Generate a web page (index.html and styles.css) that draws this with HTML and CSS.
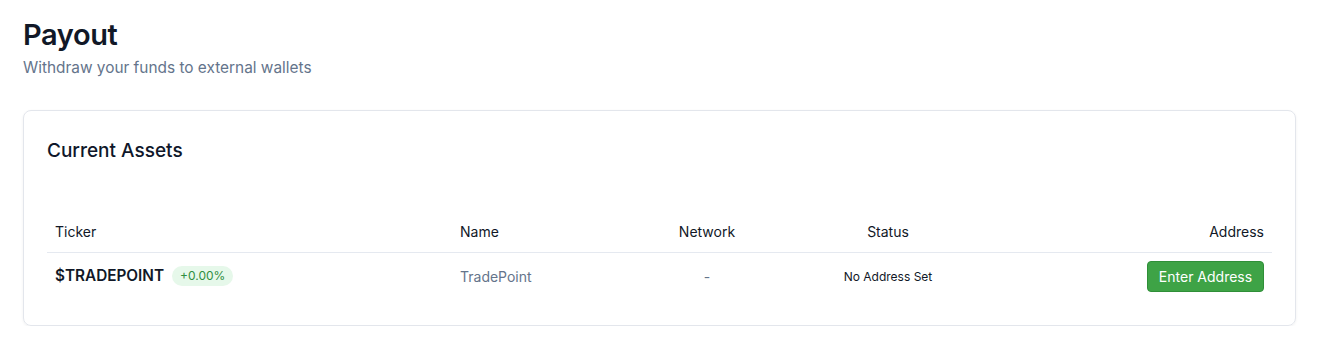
FILE: index.html
```html
<!DOCTYPE html>
<html lang="en">
<head>
<meta charset="utf-8">
<title>Payout</title>
<link rel="stylesheet" href="styles.css">
</head>
<body>
<main class="page">
  <header class="page-header">
    <h1 class="page-title">Payout</h1>
    <p class="page-subtitle">Withdraw your funds to external wallets</p>
  </header>
  <section class="card">
    <h2 class="card-title">Current Assets</h2>
    <table class="assets">
      <colgroup>
        <col class="col-ticker">
        <col class="col-name">
        <col class="col-network">
        <col class="col-status">
        <col class="col-address">
      </colgroup>
      <thead>
        <tr>
          <th class="left">Ticker</th>
          <th class="left">Name</th>
          <th class="center">Network</th>
          <th class="center">Status</th>
          <th class="right">Address</th>
        </tr>
      </thead>
      <tbody>
        <tr>
          <td class="left"><span class="ticker">$TRADEPOINT</span><span class="change">+0.00%</span></td>
          <td class="left name">TradePoint</td>
          <td class="center muted">-</td>
          <td class="center status">No Address Set</td>
          <td class="right"><button class="btn-enter" type="button">Enter Address</button></td>
        </tr>
      </tbody>
    </table>
  </section>
</main>
</body>
</html>
```
FILE: styles.css
```css
* { box-sizing: border-box; }
html, body { margin: 0; padding: 0; background: #ffffff; }
body {
  font-family: Inter, "Noto Sans", "Liberation Sans", sans-serif;
  color: #0f172a;
}
.page { padding: 17px 24px 0 23px; }
.page-header { margin-bottom: 32px; }
.page-title {
  margin: 0;
  font-size: 29px;
  line-height: 36px;
  font-weight: 600;
  letter-spacing: -0.4px;
  color: #111827;
}
.page-subtitle {
  margin: 5px 0 0;
  font-size: 15.4px;
  line-height: 20px;
  color: #64748b;
}
.card {
  border: 1px solid #e3e6ec;
  border-radius: 8px;
  box-shadow: 0 1px 3px rgba(15, 23, 42, 0.06);
  padding: 26px 23px 25px 23px;
  width: 1273px;
}
.card-title {
  margin: 0 0 47px;
  font-size: 19px;
  line-height: 28px;
  font-weight: 500;
  color: #0f172a;
}
.assets { width: 100%; border-collapse: collapse; table-layout: fixed; }
.col-ticker { width: 405px; }
.col-name { width: 180px; }
.col-network { width: 150px; }
.col-status { width: 212px; }
.col-address { width: auto; }
.assets th {
  font-size: 14px;
  font-weight: 400;
  color: #111827;
  height: 40px;
  padding: 0 8px;
  border-bottom: 1px solid #e5e9f0;
}
.assets td {
  height: 48px;
  padding: 0 8px;
  font-size: 14px;
}
.left { text-align: left; }
.center { text-align: center; }
.right { text-align: right; }
.ticker {
  font-size: 15.3px;
  font-weight: 600;
  color: #111827;
}
.change {
  display: inline-block;
  margin-left: 8px;
  padding: 2px 8px;
  border-radius: 999px;
  background: #e6f8ea;
  color: #2f8f3f;
  font-size: 12px;
  line-height: 16px;
  vertical-align: 1px;
}
.assets .name { color: #64748b; }
.assets .muted { color: #64748b; }
.assets .status { font-size: 12px; color: #111827; }
.btn-enter {
  font-family: inherit;
  font-size: 14px;
  color: #ffffff;
  background: #3ea346;
  border: 1px solid #2f8f38;
  border-radius: 4px;
  height: 31px;
  width: 117px;
  padding: 0;
  cursor: pointer;
}
```
